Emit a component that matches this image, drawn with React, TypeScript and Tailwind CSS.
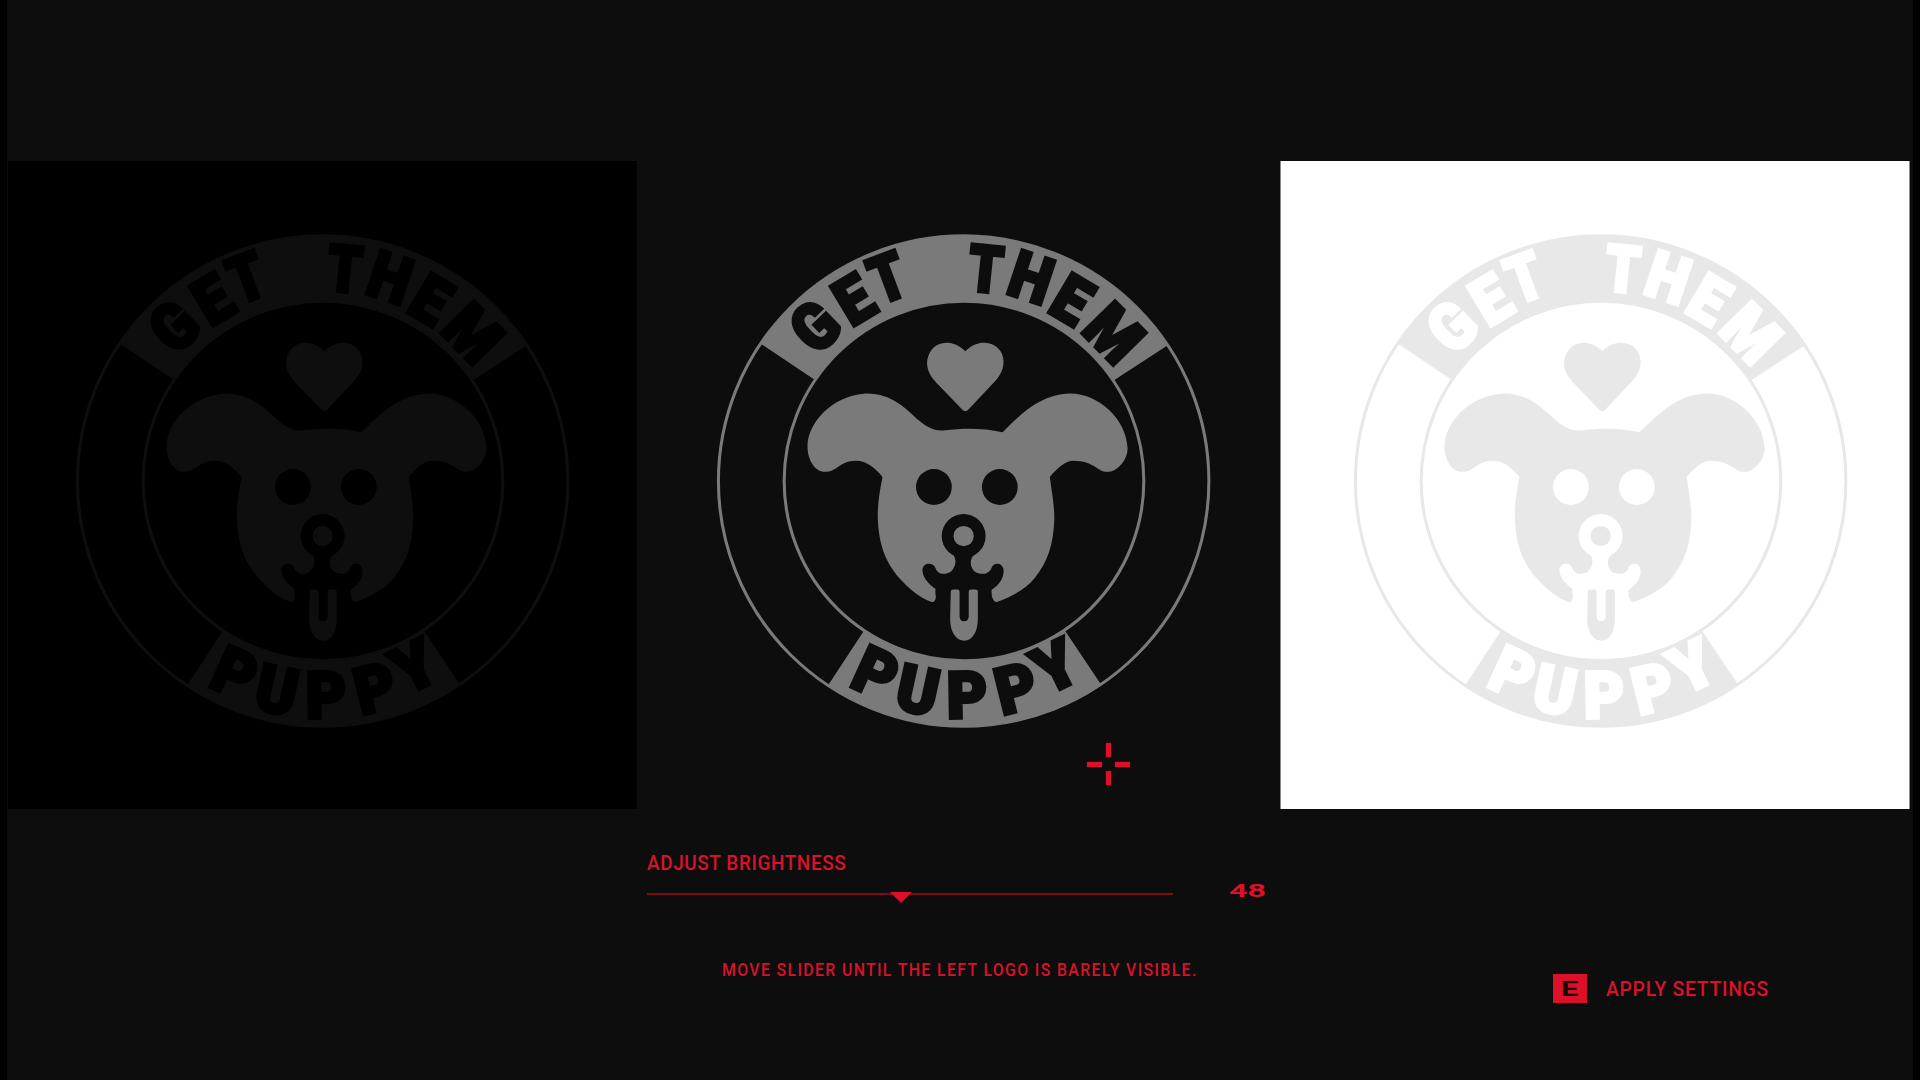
const RED = "#dc1129";

function Letter({ c, x, y, a, fill, sx = 0.8 }: { c: string; x: number; y: number; a: number; fill: string; sx?: number }) {
  return (
    <text
      transform={`translate(${x} ${y}) rotate(${a}) scale(${sx} 1)`}
      textAnchor="middle"
      dy="68"
      fontFamily="Roboto, sans-serif"
      fontWeight={900}
      fontSize={192}
      fill={fill}
      stroke={fill}
      strokeWidth={11}
      strokeLinejoin="miter"
    >
      {c}
    </text>
  );
}

function Logo({ fg, bg, className }: { fg: string; bg: string; className: string }) {
  return (
    <svg viewBox="0 0 1568 1568" className={className}>
      <circle cx="780" cy="772.5" r="725.5" fill="none" stroke={fg} strokeWidth="9" />
      <circle cx="781" cy="772" r="532" fill="none" stroke={fg} strokeWidth="9" />
      <path d="M178 365A728 728 0 0 1 1385 370L1225 474A536 536 0 0 0 338 472Z" fill={fg} />
      <path d="M485 1215A532 532 0 0 0 1080 1215L1187 1375A728 728 0 0 1 378 1378Z" fill={fg} />
      {[
        ["G", 340, 315, -44, 0.9],
        ["E", 455, 235, -31, 0.92],
        ["T", 555, 170, -20.5, 0.84],
        ["T", 845, 145, 5.9, 0.84],
        ["H", 980, 170, 18.4, 0.9],
        ["E", 1100, 235, 30.8, 0.92],
        ["M", 1225, 335, 45.5, 0.9],
        ["P", 520, 1340, 24.6, 0.95],
        ["U", 645, 1390, 12.3, 0.95],
        ["P", 790, 1405, -1, 0.95],
        ["P", 935, 1385, -14, 0.95],
        ["Y", 1050, 1320, -26, 1],
      ].map(([c, x, y, a, s], i) => (
        <Letter key={i} c={c as string} x={x as number} y={y as number} a={a as number} sx={s as number} fill={bg} />
      ))}
      <path
        d="M785 566Q780 566 775 560L700 482C670 452 665 420 680 392C697 358 748 350 785 388C822 350 875 358 893 395C905 425 895 455 870 480L795 560Q790 566 785 566Z"
        fill={fg}
      />
      <path
        d="M318 670C318 600 390 520 490 513C570 512 610 560 650 595C680 620 700 625 725 622C780 615 840 615 895 628C940 585 1000 515 1095 513C1180 513 1262 590 1265 675C1265 710 1235 745 1205 745C1175 745 1165 712 1105 712C1080 712 1055 735 1035 760C1040 800 1050 850 1048 890C1045 960 1030 1010 990 1060C960 1095 920 1115 878 1130C868 1132 860 1110 862 1095L697 1095C700 1125 695 1130 685 1130C650 1118 625 1095 600 1070C550 1020 528 960 526 880C525 840 532 800 540 760C520 735 495 712 460 712C415 712 405 745 370 745C340 745 318 710 318 670Z"
        fill={fg}
      />
      <circle cx="692" cy="790" r="53" fill={bg} />
      <circle cx="887" cy="790" r="53" fill={bg} />
      <circle cx="780" cy="935" r="65" fill={bg} />
      <path
        d="M745 985C760 1000 757 1020 750 1030C740 1050 705 1055 697 1030C690 1012 660 1012 658 1035C658 1060 680 1080 697 1092L697 1110L862 1110L862 1095C885 1080 900 1060 898 1035C895 1012 868 1012 862 1030C852 1055 815 1050 805 1030C798 1015 800 1000 815 985Z"
        fill={bg}
      />
      <circle cx="780" cy="935" r="30" fill={fg} />
      <path
        d="M742 1100Q742 1093 750 1093L762 1093Q768 1093 768 1100L768 1172Q768 1187 781 1187Q795 1187 795 1172L795 1100Q795 1093 802 1093L814 1093Q822 1093 822 1100L822 1180C822 1220 805 1245 782 1245C758 1245 740 1220 740 1180Z"
        fill={fg}
      />
    </svg>
  );
}

export default function App() {
  return (
    <div className="relative flex h-screen w-screen overflow-hidden bg-black [font-family:Roboto,sans-serif]">
      <div className="ml-[7px] mr-[7px] flex flex-1 flex-col bg-[#0d0d0e] pt-[161px]">
        <div className="flex h-[648px]">
          <div className="ml-[1px] flex w-[629px] items-start justify-start bg-black">
            <Logo fg="#0e0e0e" bg="#000000" className="ml-[51px] mt-[59px] h-[530px] w-[530px] shrink-0" />
          </div>
          <div className="flex flex-1 items-start">
            <Logo fg="#7a7a7a" bg="#0d0d0e" className="ml-[63px] mt-[59px] h-[530px] w-[530px] shrink-0" />
          </div>
          <div className="mr-[3px] flex w-[630px] items-start border-x border-[#8a8a8a] bg-white">
            <Logo fg="#e8e8e8" bg="#ffffff" className="ml-[56px] mt-[59px] h-[530px] w-[530px] shrink-0" />
          </div>
        </div>
        <div className="relative flex pl-[640px]">
          <div className="w-[526px] shrink-0 pt-[38px]">
            <div className="origin-left scale-x-[0.9] whitespace-nowrap text-[21px] font-medium leading-[32px] tracking-[0.7px] text-[#dc1129]">
              ADJUST BRIGHTNESS
            </div>
            <div className="relative mt-[14px] h-[2px] bg-[#7c0c17]">
              <div className="absolute left-[243px] top-[-1px] h-0 w-0 border-x-[11px] border-t-[11px] border-x-transparent border-t-[#dc1129]" />
            </div>
            <div className="mt-[61px] origin-left translate-x-[75px] scale-x-[0.88] whitespace-nowrap text-[18px] font-medium leading-[28px] tracking-[1.55px] text-[#dc1129]">
              MOVE SLIDER UNTIL THE LEFT LOGO IS BARELY VISIBLE.
            </div>
          </div>
          <div className="ml-[56px] pt-[69px]">
            <div className="origin-left scale-x-[1.7] text-[19px] font-bold leading-[26px] text-[#dc1129]">48</div>
          </div>
          <div className="absolute left-[1546px] top-[165px] flex items-center gap-[19px]">
            <div className="flex h-[29px] w-[34px] items-center justify-center bg-[#dc1129]">
              <div className="origin-center scale-x-[1.55] text-[20px] font-bold leading-none text-[#1a0406]">E</div>
            </div>
            <div className="origin-left scale-x-[0.92] whitespace-nowrap text-[21px] font-medium leading-[28px] tracking-[0.8px] text-[#dc1129]">
              APPLY SETTINGS
            </div>
          </div>
        </div>
      </div>
      <div className="absolute left-[1087px] top-[743px] h-[42px] w-[43px]">
        <div className="absolute left-[19px] top-0 h-[14px] w-[5px] shadow-[0_0_2px_#7c0c17]" style={{ background: RED }} />
        <div className="absolute left-[19px] top-[28px] h-[14px] w-[5px] shadow-[0_0_2px_#7c0c17]" style={{ background: RED }} />
        <div className="absolute left-0 top-[19px] h-[5px] w-[15px] shadow-[0_0_2px_#7c0c17]" style={{ background: RED }} />
        <div className="absolute left-[28px] top-[19px] h-[5px] w-[15px] shadow-[0_0_2px_#7c0c17]" style={{ background: RED }} />
      </div>
    </div>
  );
}
